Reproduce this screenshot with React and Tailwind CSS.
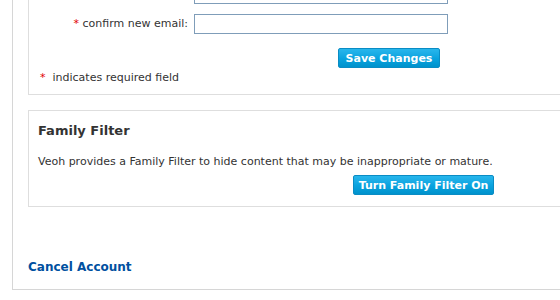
import React from 'react';

const font = { fontFamily: '"DejaVu Sans", Verdana, sans-serif' };

const BlueButton = ({ children, className = '' }) => (
  <button
    className={`h-[20px] whitespace-nowrap rounded-[2px] border border-[#0a8cc4] bg-gradient-to-b from-[#27b6ec] via-[#0aa4e0] to-[#0092cc] px-0 text-[11px] font-bold leading-none text-white ${className}`}
  >
    {children}
  </button>
);

const App = () => {
  return (
    <div className="h-[300px] w-[560px] overflow-hidden bg-white text-[#333]" style={font}>
      <div className="ml-[12px] w-[600px] border-b border-l border-[#d6d6d6] pb-[11px] pl-[15px]">
        {/* account settings box (top is scrolled out of view) */}
        <div className="border-b border-l border-[#dedede] pb-[7px]">
          <div className="-mt-[16px] flex items-center">
            <div className="w-[165px]" />
            <input className="h-[20px] w-[254px] border border-[#7f9db9]" />
          </div>
          <div className="mt-[10px] flex items-center">
            <label className="w-[160px] pr-[1px] text-right text-[11px]">
              <span className="text-[#e10000]">*</span> confirm new email:
            </label>
            <input className="ml-[5px] h-[20px] w-[254px] border border-[#7f9db9]" />
          </div>
          <div className="mt-[14px] flex">
            <BlueButton className="ml-[309px] w-[102px]">Save Changes</BlueButton>
          </div>
          <p className="mt-[2px] pl-[11px] text-[11px]">
            <span className="text-[#e10000]">*</span>
            <span className="ml-[7px]">indicates required field</span>
          </p>
        </div>

        <div className="mt-[15px] border-y border-l border-[#dedede] pb-[11px] pl-[9px] pt-[11px]">
          <h3 className="text-[13px] font-bold leading-[18px]">Family Filter</h3>
          <p className="mt-[14px] text-[11px]">
            Veoh provides a Family Filter to hide content that may be inappropriate or mature.
          </p>
          <div className="mt-[5px] flex">
            <BlueButton className="ml-[315px] w-[141px]">Turn Family Filter On</BlueButton>
          </div>
        </div>

        <div className="pt-[47px]">
          <a href="#" className="text-[12px] font-bold text-[#0050a0]">
            Cancel Account
          </a>
        </div>
      </div>
    </div>
  );
};

export default App;
